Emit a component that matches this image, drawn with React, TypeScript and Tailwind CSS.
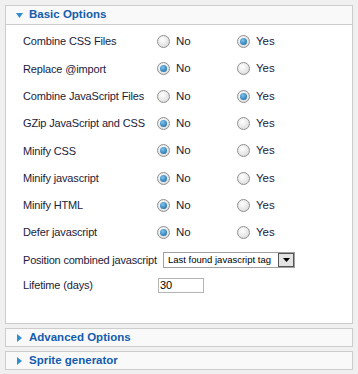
import React from 'react';

const rows: [string, boolean][] = [
  ['Combine CSS Files', true],
  ['Replace @import', false],
  ['Combine JavaScript Files', true],
  ['GZip JavaScript and CSS', false],
  ['Minify CSS', false],
  ['Minify javascript', false],
  ['Minify HTML', false],
  ['Defer javascript', false],
];

function Radio({ on }: { on: boolean }) {
  return (
    <span className="flex h-[13px] w-[13px] items-center justify-center rounded-full border border-[#8f8f8f] bg-[radial-gradient(circle_at_40%_35%,#ffffff,#d4d4d4)]">
      {on && (
        <span className="h-[7px] w-[7px] rounded-full bg-[radial-gradient(circle_at_40%_35%,#7fc4f0,#0b5d99)]" />
      )}
    </span>
  );
}

function Arrow({ open }: { open: boolean }) {
  return open ? (
    <svg width="7" height="5" viewBox="0 0 7 5" className="mr-[6px]">
      <path d="M0 0 L7 0 L3.5 5 Z" fill="#2e8fd0" />
    </svg>
  ) : (
    <svg width="5" height="8" viewBox="0 0 5 8" className="mr-[7px]">
      <path d="M0 0 L5 4 L0 8 Z" fill="#2e8fd0" />
    </svg>
  );
}

export default function App() {
  return (
    <div className="h-[374px] w-[358px] bg-[#f0f0f0] px-[5px] pt-[5px] font-['Liberation_Sans',Arial,sans-serif] text-[11px] text-[#1b1b3a]">
      <div className="border border-[#cccccc] bg-white">
        <div className="flex h-[19px] items-center border-b border-[#cccccc] bg-[#f9f9f9] pl-[10px] text-[11.5px] font-bold text-[#135cae]">
          <Arrow open />
          Basic Options
        </div>
        <div className="h-[298px] pl-[17px] pt-[3px]">
          {rows.map(([label, yes]) => (
            <div key={label} className="flex h-[27.3px] items-center whitespace-nowrap">
              <span className="w-[134px] tracking-[-0.15px]">{label}</span>
              <span className="flex w-[80px] items-center gap-[6px] text-[11.5px]">
                <Radio on={!yes} />
                No
              </span>
              <span className="flex items-center gap-[6px] text-[11.5px]">
                <Radio on={yes} />
                Yes
              </span>
            </div>
          ))}
          <div className="flex h-[27px] items-center whitespace-nowrap">
            <span className="w-[140px] tracking-[-0.2px]">Position combined javascript</span>
            <div className="flex h-[16px] w-[132px] items-center border border-[#a0a0a0] bg-white pl-[4px] text-[9.5px] text-black">
              <span className="flex-1">Last found javascript tag</span>
              <span className="flex h-[14px] w-[16px] items-center justify-center border border-[#555] bg-[#e4e4e4]">
                <svg width="7" height="4" viewBox="0 0 7 4">
                  <path d="M0 0 L7 0 L3.5 4 Z" fill="#000" />
                </svg>
              </span>
            </div>
          </div>
          <div className="flex h-[24px] items-center whitespace-nowrap">
            <span className="w-[135px] tracking-[-0.15px]">Lifetime (days)</span>
            <div className="flex h-[15px] w-[46px] items-center border border-[#b5b5b5] bg-white pl-[1px] text-[11px] text-black">
              30
            </div>
          </div>
        </div>
      </div>
      <div className="mt-[4px] flex h-[19px] items-center border border-[#cccccc] bg-[#f9f9f9] pl-[11px] text-[11.5px] font-bold text-[#135cae]">
        <Arrow open={false} />
        Advanced Options
      </div>
      <div className="mt-[4px] flex h-[19px] items-center border border-[#cccccc] bg-[#f9f9f9] pl-[11px] text-[11.5px] font-bold text-[#135cae]">
        <Arrow open={false} />
        Sprite generator
      </div>
    </div>
  );
}
